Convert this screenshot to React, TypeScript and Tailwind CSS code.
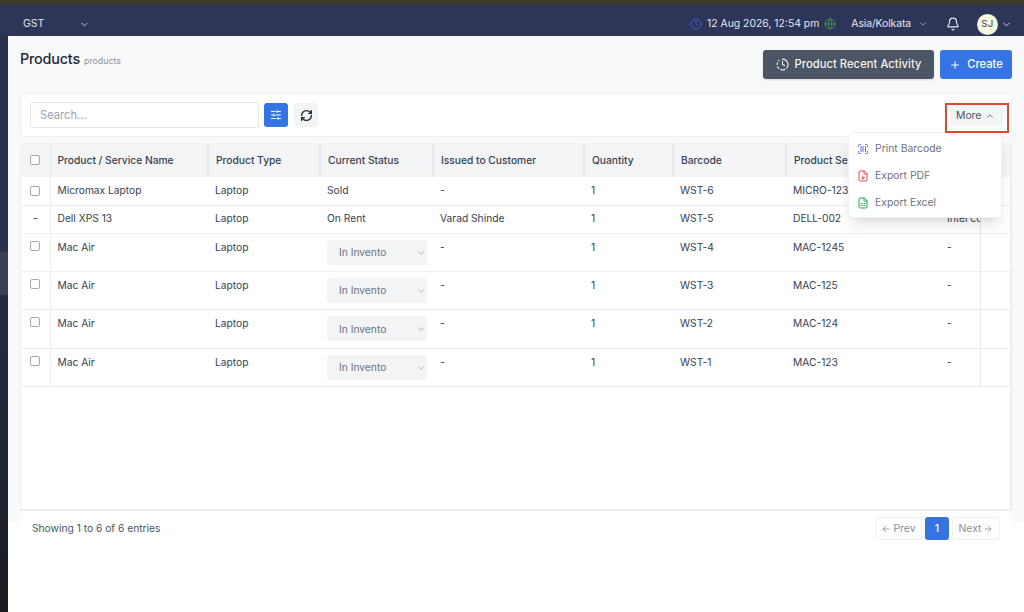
import {
  ArrowLeft,
  ArrowRight,
  Bell,
  ChevronDown,
  ChevronUp,
  Clock,
  ClockFading,
  FileDown,
  FileSpreadsheet,
  Globe,
  Plus,
  RefreshCw,
  ScanBarcode,
  SlidersHorizontal,
} from 'lucide-react';

type Row = {
  name: string;
  status: string;
  customer: string;
  barcode: string;
  serial: string;
  extra: string;
  tall: boolean;
  check: boolean;
};

const rows: Row[] = [
  { name: 'Micromax Laptop', status: 'Sold', customer: '-', barcode: 'WST-6', serial: 'MICRO-123', extra: '', tall: false, check: true },
  { name: 'Dell XPS 13', status: 'On Rent', customer: 'Varad Shinde', barcode: 'WST-5', serial: 'DELL-002', extra: 'Intel core', tall: false, check: false },
  { name: 'Mac Air', status: '', customer: '-', barcode: 'WST-4', serial: 'MAC-1245', extra: '-', tall: true, check: true },
  { name: 'Mac Air', status: '', customer: '-', barcode: 'WST-3', serial: 'MAC-125', extra: '-', tall: true, check: true },
  { name: 'Mac Air', status: '', customer: '-', barcode: 'WST-2', serial: 'MAC-124', extra: '-', tall: true, check: true },
  { name: 'Mac Air', status: '', customer: '-', barcode: 'WST-1', serial: 'MAC-123', extra: '-', tall: true, check: true },
];

const headers = ['Product / Service Name', 'Product Type', 'Current Status', 'Issued to Customer', 'Quantity', 'Barcode', 'Product Serial No', ''];

function Checkbox() {
  return <span className="block w-[10px] h-[10px] rounded-[2px] border border-[#a3a8b1] bg-white" />;
}

export default function App() {
  return (
    <div className="h-[612px] w-[1024px] overflow-hidden flex flex-col bg-[#2d3558] font-['Inter',sans-serif] text-[#1f2937]">
      <div className="h-[5px] shrink-0 bg-[#3b3a28]" />

      {/* Top bar */}
      <header className="h-[31px] shrink-0 flex items-center pt-[7px] pl-[23px] pr-[12px] text-[#e5e7eb] text-[10.4px]">
        <span className="w-[56px]">GST</span>
        <ChevronDown size={11} className="text-[#d1d5db]" />
        <div className="ml-auto flex items-center">
          <Clock size={12} className="text-[#4f56c8] mr-[5px]" />
          <span>12 Aug 2026, 12:54 pm</span>
          <Globe size={12} className="text-[#3f8f4f] ml-[5px]" />
          <span className="ml-[15px] tracking-[-0.1px]">Asia/Kolkata</span>
          <ChevronDown size={10} className="ml-[7px] text-[#aeb4c6]" />
          <Bell size={14} className="ml-[18px] text-[#e5e7eb]" />
          <span className="ml-[17px] w-[21px] h-[21px] rounded-full bg-[#f4f8dc] text-[#374151] flex items-center justify-center text-[9.6px] tracking-[0.4px]">SJ</span>
          <ChevronDown size={11} className="ml-[3px]" />
        </div>
      </header>

      <div className="flex-1 flex min-h-0 bg-white">
        <div className="w-[8px] shrink-0 flex flex-col">
          <div className="h-[216px] bg-[#2a3050]" />
          <div className="h-[43px] bg-[#3a3f52]" />
          <div className="flex-1 bg-gradient-to-b from-[#252b45] to-[#1c1d20]" />
        </div>

        <main className="flex-1 min-w-0 flex flex-col relative">
          <div className="h-[486px] shrink-0 rounded-tl-[6px] bg-[#f8f9fb] pl-[12px] pr-[12px] flex flex-col">
            {/* Page title row */}
            <div className="h-[57px] shrink-0 flex items-start justify-between">
              <div className="flex items-baseline pt-[13px]">
                <h1 className="text-[14.4px] leading-[20px] font-medium text-[#1f2937] tracking-[-0.2px]">Products</h1>
                <span className="ml-[4px] text-[8.8px] text-[#8b919c]">products</span>
              </div>
              <div className="flex gap-[6px] pt-[14px]">
                <button className="h-[29px] w-[171px] rounded-[3px] bg-[#4b5563] text-[#f3f4f6] text-[11.2px] font-medium tracking-[0.05px] flex items-center justify-center gap-[6px] shadow-sm">
                  <ClockFading size={13} />
                  Product Recent Activity
                </button>
                <button className="h-[29px] w-[72px] rounded-[3px] bg-[#3574e3] text-white text-[11.2px] font-medium flex items-center justify-center gap-[6px]">
                  <Plus size={12} />
                  Create
                </button>
              </div>
            </div>

            {/* Toolbar */}
            <div className="h-[44px] shrink-0 rounded-[3px] bg-white border border-[#eff0f3] flex items-center pl-[9px] pr-[8px]">
              <input
                placeholder="Search..."
                className="w-[229px] h-[26px] rounded-[3px] border border-[#e5e7eb] bg-white px-[9px] text-[11.2px] placeholder:text-[#9ca3af] outline-none"
              />
              <button className="ml-[5px] w-[24px] h-[24px] rounded-[3px] bg-[#3574e3] text-white flex items-center justify-center">
                <SlidersHorizontal size={12} />
              </button>
              <button className="ml-[6px] w-[24px] h-[24px] rounded-[3px] bg-[#f3f4f6] text-[#1f2937] flex items-center justify-center">
                <RefreshCw size={13} strokeWidth={2.5} />
              </button>
              <button className="ml-auto w-[53px] h-[21px] mt-[1px] rounded-[3px] bg-[#f3f4f6] text-[#4b5563] text-[10.4px] flex items-center pl-[6px] gap-[4px]">
                More
                <ChevronUp size={10} />
              </button>
            </div>

            {/* Table */}
            <div className="mt-[6px] h-[368px] shrink-0 rounded-t-[4px] bg-white border-b-2 border-r-2 border-l border-[#eceef1] overflow-hidden">
              <table className="table-fixed w-[991px] border-collapse text-[10.24px]">
                <colgroup>
                  <col className="w-[29px]" />
                  <col className="w-[158px]" />
                  <col className="w-[112px]" />
                  <col className="w-[113px]" />
                  <col className="w-[151px]" />
                  <col className="w-[89px]" />
                  <col className="w-[113px]" />
                  <col className="w-[154px]" />
                  <col className="w-[40px]" />
                  <col className="w-[32px]" />
                </colgroup>
                <thead>
                  <tr className="h-[34px] bg-[#f3f4f6]">
                    <th className="border-r border-[#e5e7eb]">
                      <span className="flex justify-center"><Checkbox /></span>
                    </th>
                    {headers.map((h, i) => (
                      <th key={i} className="pl-[7px] pr-[5px] pt-[2px] text-left font-medium text-[#374151] whitespace-nowrap overflow-hidden border-r-2 border-[#e5e7eb]">
                        {h}
                      </th>
                    ))}
                    <th />
                  </tr>
                </thead>
                <tbody>
                  {rows.map((r) => (
                    <tr key={r.barcode} className={`${r.tall ? 'h-[38.4px]' : 'h-[28px]'} border-b border-[#eceef1] text-[#374151]`}>
                      <td className={`${r.tall ? 'align-top pt-[7px]' : ''} border-r border-[#eceef1]`}>
                        <span className="flex justify-center">{r.check ? <Checkbox /> : '-'}</span>
                      </td>
                      <td className={`pl-[7px] pr-[5px] ${r.tall ? 'align-top pt-[6px]' : ''}`}>{r.name}</td>
                      <td className={`pl-[7px] pr-[5px] ${r.tall ? 'align-top pt-[6px]' : ''}`}>Laptop</td>
                      <td className={`pl-[7px] pr-[5px] ${r.tall ? 'align-top pt-[6px]' : ''}`}>
                        {r.tall ? (
                          <span className="flex items-center justify-between w-[100px] h-[25px] pt-[1px] rounded-[3px] bg-[#f3f4f6] pl-[12px] pr-[1px] text-[#6b7280]">
                            In Invento
                            <ChevronDown size={10} className="text-[#9ca3af]" />
                          </span>
                        ) : (
                          r.status
                        )}
                      </td>
                      <td className={`pl-[7px] pr-[5px] ${r.tall ? 'align-top pt-[6px]' : ''}`}>{r.customer}</td>
                      <td className={`pl-[7px] pr-[5px] ${r.tall ? 'align-top pt-[6px]' : ''}`}>1</td>
                      <td className={`pl-[7px] pr-[5px] ${r.tall ? 'align-top pt-[6px]' : ''}`}>{r.barcode}</td>
                      <td className={`pl-[7px] pr-[5px] ${r.tall ? 'align-top pt-[6px]' : ''}`}>{r.serial}</td>
                      <td className={`pl-[7px] pr-[5px] whitespace-nowrap overflow-hidden ${r.tall ? 'align-top pt-[6px]' : ''}`}>{r.extra}</td>
                      <td className="border-l border-[#e5e7eb]" />
                    </tr>
                  ))}
                </tbody>
              </table>
            </div>

            {/* Footer: runs past the bottom of the grey panel */}
            <div className="h-[40px] shrink-0 bg-white flex items-start justify-between pl-[12px] pr-[12px] pt-[6px]">
              <span className="pt-[4px] text-[10.24px] text-[#4b5563]">Showing 1 to 6 of 6 entries</span>
              <div className="flex gap-[3px]">
                <span className="h-[23px] w-[47px] rounded-[3px] border border-[#f0f1f3] text-[#8b8f97] text-[10.4px] flex items-center justify-center gap-[2px]">
                  <ArrowLeft size={10} />
                  Prev
                </span>
                <span className="h-[23px] w-[24px] rounded-[3px] bg-[#3574e3] text-white text-[10.4px] font-medium flex items-center justify-center">1</span>
                <span className="h-[23px] w-[48px] rounded-[3px] border border-[#f0f1f3] text-[#8b8f97] text-[10.4px] flex items-center justify-center gap-[2px]">
                  Next
                  <ArrowRight size={10} />
                </span>
              </div>
            </div>
          </div>

          {/* More dropdown */}
          <div className="absolute left-[840px] top-[96px] w-[154px] h-[86px] rounded-[5px] bg-white border border-[#f0f1f3] shadow-lg py-[2px] text-[10.4px] text-[#6b7280]">
            <div className="h-[27px] flex items-center pl-[8px] gap-[6px]">
              <ScanBarcode size={12} className="text-[#6366f1]" />
              Print Barcode
            </div>
            <div className="h-[27px] flex items-center pl-[8px] gap-[6px]">
              <FileDown size={12} className="text-[#ef4444]" />
              Export PDF
            </div>
            <div className="h-[27px] flex items-center pl-[8px] gap-[6px]">
              <FileSpreadsheet size={12} className="text-[#22a755]" />
              Export Excel
            </div>
          </div>

          {/* Annotation around More */}
          <div className="absolute left-[937px] top-[67px] w-[64px] h-[30px] border-2 border-[#e8432e]" />
        </main>
      </div>
    </div>
  );
}
